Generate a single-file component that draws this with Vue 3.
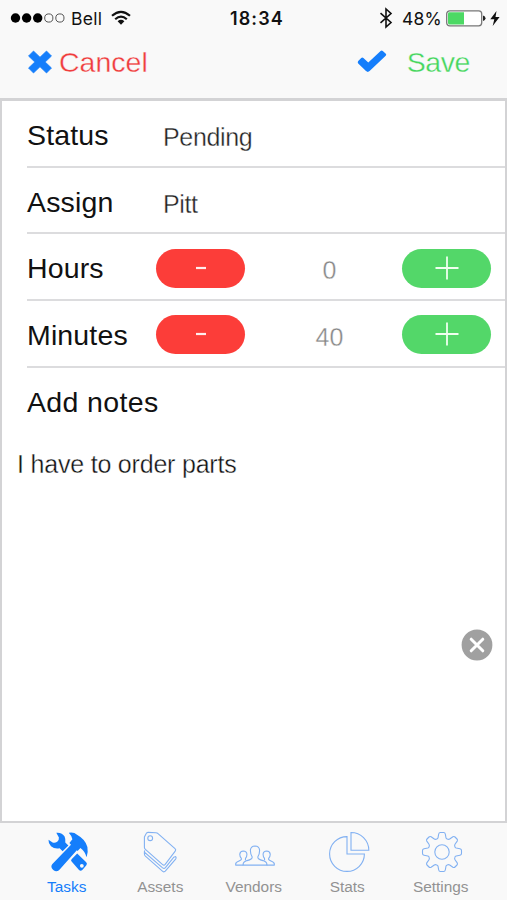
<script setup>
import { ref } from 'vue'

const details = [
  { label: 'Status', value: 'Pending' },
  { label: 'Assign', value: 'Pitt' },
]
const counters = ref([
  { label: 'Hours', value: 0, step: 1 },
  { label: 'Minutes', value: 40, step: 5 },
])
const tabs = ['Tasks', 'Assets', 'Vendors', 'Stats', 'Settings']
const active = ref('Tasks')
</script>

<template>
  <div class="screen">
    <header class="top">
      <div class="statusbar">
        <svg class="signal" width="56" height="12" viewBox="0 0 56 12">
          <circle v-for="n in 3" :key="n" :cx="n * 11.1 - 5.6" cy="6" r="4.7" fill="#000" />
          <circle v-for="n in 2" :key="n + 3" :cx="n * 11.1 + 27.7" cy="6" r="4.1" fill="none" stroke="#555" stroke-width="1" />
        </svg>
        <span class="carrier">Bell</span>
        <svg class="wifi" width="20" height="16" viewBox="0 0 20 16">
          <g fill="none" stroke="#111" stroke-width="2.2">
            <path d="M1 5.8Q10-2.2 19 5.8" />
            <path d="M4.2 9.2Q10 4 15.8 9.2" />
          </g>
          <path d="M6.6 11.2Q10 8.3 13.4 11.2L10 14.8Z" fill="#111" />
        </svg>
        <span class="clock">18:34</span>
        <svg class="bluetooth" width="14" height="22" viewBox="0 0 14 22">
          <path d="M1.5 6.2L12 15.5L7 20V2L12 6.5L1.5 15.8" fill="none" stroke="#111" stroke-width="1.6" />
        </svg>
        <span class="percent">48%</span>
        <svg class="battery" width="40" height="17" viewBox="0 0 40 17">
          <rect x=".7" y=".8" width="35" height="15" rx="3" fill="#fff" stroke="#777" stroke-width="1.3" />
          <path d="M3.4 2.2H18V14.4H3.4Q2 14.4 2 13V3.6Q2 2.2 3.4 2.2Z" fill="#4cd964" />
          <path d="M37 5.5Q39.5 6 39.5 8.3T37 11Z" fill="#222" />
        </svg>
        <svg class="bolt" width="10" height="15" viewBox="0 0 10 15">
          <path d="M6.5 0L.3 8.3H4.3L2.7 15L9.6 6H5.5Z" fill="#111" />
        </svg>
      </div>
      <div class="actions">
        <button class="cancel">
          <svg width="24" height="24" viewBox="0 0 24 24">
            <path d="M5.5 1L12 7.2L18.5 1L23.5 6L17.2 12L23.5 18L18.5 23L12 16.8L5.5 23L.5 18L6.8 12L.5 6Z" fill="#157efb" stroke="#157efb" stroke-width=".7" stroke-linejoin="round" />
          </svg>
          <span>Cancel</span>
        </button>
        <button class="save">
          <svg width="30" height="23" viewBox="0 0 30 23">
            <path d="M1.2 11L4.2 8Q5.3 7 6.4 8L11.3 12.4L23.6 .9Q24.7 0 25.8 .9L28.8 3.8Q29.7 4.7 28.7 5.8L12.6 21.1Q10.8 22.7 9 21.1L1.2 13.4Q.2 12.2 1.2 11Z" fill="#157efb" />
          </svg>
          <span>Save</span>
        </button>
      </div>
    </header>

    <main class="panel">
      <section v-for="item in details" :key="item.label" class="row detail">
        <span class="label">{{ item.label }}</span>
        <span class="value">{{ item.value }}</span>
      </section>
      <section v-for="item in counters" :key="item.label" class="row counter">
        <span class="label">{{ item.label }}</span>
        <button class="pill minus" @click="item.value = Math.max(0, item.value - item.step)">
          <svg width="12" height="4" viewBox="0 0 12 4"><path d="M1 2H11" stroke="#ffeeed" stroke-width="2.2" /></svg>
        </button>
        <span class="number">{{ item.value }}</span>
        <button class="pill plus" @click="item.value += item.step">
          <svg width="24" height="24" viewBox="0 0 24 24"><path d="M.5 12H23.5M12 .5V23.5" stroke="#efffef" stroke-width="1.8" /></svg>
        </button>
      </section>
      <h2 class="label notes-title">Add notes</h2>
      <p class="notes">I have to order parts</p>
      <button class="clear">
        <svg width="32" height="32" viewBox="0 0 32 32">
          <circle cx="16" cy="16" r="15.4" fill="#a0a0a0" />
          <path d="M10.2 10.2L21.8 21.8M21.8 10.2L10.2 21.8" stroke="#fff" stroke-width="3" stroke-linecap="round" />
        </svg>
      </button>
    </main>

    <nav class="tabs">
      <button v-for="tab in tabs" :key="tab" class="tab" :class="{ active: tab === active }" @click="active = tab">
        <svg v-if="tab === 'Tasks'" class="solid" width="42" height="42" viewBox="-1 -1 42 42">
          <path d="M8.3 .8Q14 .2 16.6 4.6Q17.8 7.4 17.3 10.6L20.4 13.4L14.6 19.2L11.6 16.2Q6.6 17.2 3 14.2Q.2 11.4 .5 7.8L4.6 10.6Q7.2 11.2 9.2 9.8Q11.2 8.2 10.9 5.4Z" />
          <path fill-rule="evenodd" d="M23.6 27.2L29.2 21.6L38.2 30.2Q39.7 31.8 38.2 33.4L34.3 37.9Q32.6 39.5 30.8 37.8L23.6 29.6Q22.5 28.4 23.6 27.2ZM33.8 31.9A1.9 1.9 0 1 0 33.9 35.7A1.9 1.9 0 0 0 33.8 31.9Z" />
          <path d="M20.8 .8Q25.6 -.3 29.4 3Q37.4 7.4 39.4 15Q40.4 20.5 38.6 25.2Q36.9 19.2 32.4 16L29.6 18.9L28.8 18.2L11 38.2Q8.3 40.4 5.6 38.2L4.6 37.2Q2.3 34.6 4.4 32L23 12.8L21.4 11.1L24.4 7.3Q23.8 3.9 20.8 .8Z" />
        </svg>
        <svg v-else-if="tab === 'Assets'" class="tags" width="42" height="42" viewBox="-1 -1 42 42">
          <path d="M4.4 5L6.2 1.6Q6.8 .3 8.2 .4L15.8 .8Q17.3 .9 18.3 1.8L35 16.6Q36.3 17.8 35.2 19.1L25.2 32.4Q24 33.8 22.6 32.6L5.4 17.4Q4.4 16.5 4.4 15.2Z" />
          <circle cx="10.2" cy="6.2" r="2.4" />
          <path d="M5.2 18.6Q4.2 19 4.4 20.2L22.6 35.9Q24.2 37 25.4 35.6L33.8 25.2L35.6 24.6Q36.6 25.8 35.6 27.1L25.3 39.2Q24 40.4 22.7 39.3L5.4 24.2Q4.4 23.2 4.4 22V20.2" />
        </svg>
        <svg v-else-if="tab === 'Vendors'" width="42" height="42" viewBox="-1 -1 42 42">
          <path d="M8.2 33.1Q7.5 30.3 12 28.6Q17.7 27.2 17.1 24.8Q15.3 21.8 15.4 18.1Q15.8 14.1 20 14Q24.2 14.1 24.6 18.1Q24.7 21.8 22.9 24.8Q22.3 27.2 28 28.6Q32.5 30.3 31.8 33.1Z" />
          <path d="M8.2 33.1H.8Q0 30.5 3.5 29.3Q7 28.1 6.3 26.4Q4.6 24.4 4.8 22.1Q5.1 19.1 8.3 19Q11.6 19.1 11.9 22.1Q12 24.4 10.5 26.4L10.4 28.2M31.8 33.1H39.2Q40 30.5 36.5 29.3Q33 28.1 33.7 26.4Q35.4 24.4 35.2 22.1Q34.9 19.1 31.7 19Q28.4 19.1 28.1 22.1Q28 24.4 29.5 26.4L29.6 28.2" />
        </svg>
        <svg v-else-if="tab === 'Stats'" width="42" height="42" viewBox="-1 -1 42 42">
          <path d="M18 4.6A17.4 17.4 0 1 0 35.4 22H18Z" />
          <path d="M22 .5V18.2H39.8A17.8 17.8 0 0 0 22 .5Z" />
        </svg>
        <svg v-else width="42" height="42" viewBox="-1 -1 42 42">
          <path d="M16.7 2Q17 .5 18.4.5H21.6Q23 .5 23.3 2L24 5.8Q24.3 6.8 25.2 7.1Q26.7 7.7 27.7 7L30.9 4.8Q32.1 4.1 33 5L35 7Q35.9 7.9 35.2 9.1L33 12.3Q32.3 13.3 32.9 14.8Q33.2 15.7 34.2 16L38 16.7Q39.5 17 39.5 18.4V21.6Q39.5 23 38 23.3L34.2 24Q33.2 24.3 32.9 25.2Q32.3 26.7 33 27.7L35.2 30.9Q35.9 32.1 35 33L33 35Q32.1 35.9 30.9 35.2L27.7 33Q26.7 32.3 25.2 32.9Q24.3 33.2 24 34.2L23.3 38Q23 39.5 21.6 39.5H18.4Q17 39.5 16.7 38L16 34.2Q15.7 33.2 14.8 32.9Q13.3 32.3 12.3 33L9.1 35.2Q7.9 35.9 7 35L5 33Q4.1 32.1 4.8 30.9L7 27.7Q7.7 26.7 7.1 25.2Q6.8 24.3 5.8 24L2 23.3Q.5 23 .5 21.6V18.4Q.5 17 2 16.7L5.8 16Q6.8 15.7 7.1 14.8Q7.7 13.3 7 12.3L4.8 9.1Q4.1 7.9 5 7L7 5Q7.9 4.1 9.1 4.8L12.3 7Q13.3 7.7 14.8 7.1Q15.7 6.8 16 5.8Z" />
          <circle cx="20" cy="20" r="7.2" />
        </svg>
        <span>{{ tab }}</span>
      </button>
    </nav>
  </div>
</template>

<style>
body {
  margin: 0;
}
</style>

<style scoped>
.screen {
  width: 507px;
  height: 900px;
  display: flex;
  flex-direction: column;
  overflow: hidden;
  background: #f9f9f9;
  font-family: "Liberation Sans", Arial, sans-serif;
  color: #111;
}
button {
  border: 0;
  padding: 0;
  margin: 0;
  background: none;
  font: inherit;
  color: inherit;
}
svg {
  display: block;
  flex: none;
}
.top {
  height: 98px;
  flex: none;
}
.statusbar {
  height: 36px;
  display: flex;
  align-items: center;
  padding-left: 10px;
  font-family: Inter, sans-serif;
  font-size: 17.5px;
  white-space: nowrap;
}
.carrier {
  width: 34px;
  margin-left: 5px;
  letter-spacing: 0.3px;
}
.wifi {
  margin-left: 6px;
}
.clock {
  width: 56px;
  margin-left: 99px;
  font-size: 18px;
  font-weight: 600;
  letter-spacing: 1.1px;
}
.bluetooth {
  margin-left: 93px;
}
.percent {
  width: 40px;
  margin-left: 9px;
  letter-spacing: 0.2px;
}
.battery {
  margin-left: 4px;
}
.bolt {
  margin-left: 4px;
}
.actions {
  height: 52px;
  display: flex;
  align-items: center;
  justify-content: space-between;
  padding: 0 37px 0 28px;
  font-size: 28.5px;
  -webkit-text-stroke: 0.35px #f9f9f9;
}
.cancel,
.save {
  display: flex;
  align-items: center;
}
.cancel {
  gap: 7px;
  color: #f03c3c;
}
.save {
  gap: 20px;
  color: #45d65d;
  letter-spacing: -0.4px;
}
.save svg {
  margin-bottom: 2px;
}
.panel {
  flex: 1;
  display: flex;
  flex-direction: column;
  background: #fff;
  border: solid #d3d3d5;
  border-width: 3px 2px 2px;
}
.row {
  height: 64.7px;
  flex: none;
  margin-left: 25px;
  border-bottom: 2px solid #dcdcde;
  display: grid;
  align-items: center;
}
.detail {
  grid-template-columns: 136px 1fr;
}
.counter {
  grid-template-columns: 129px 89px 1fr 89px;
  padding-right: 14px;
}
.label {
  font-size: 28.5px;
  line-height: 32px;
  letter-spacing: 0.15px;
  font-weight: 400;
}
.detail .label {
  padding-top: 3px;
}
.counter .label {
  padding-top: 3px;
}
.value {
  padding-top: 8px;
  font-size: 25px;
  color: #222;
  letter-spacing: -0.35px;
  -webkit-text-stroke: 0.35px #fff;
}
.pill {
  height: 39px;
  margin-top: 3px;
  border-radius: 20px;
  display: flex;
  justify-content: center;
  align-items: center;
}
.minus {
  background: #fc3d39;
}
.plus {
  background: #53d769;
}
.minus svg,
.plus svg {
  margin-bottom: 1px;
}
.number {
  text-align: center;
  padding-top: 8px;
  padding-left: 12px;
  font-size: 25px;
  color: #888;
  -webkit-text-stroke: 0.35px #fff;
}
.notes-title {
  margin: 18px 0 0 25px;
  letter-spacing: 0.35px;
}
.notes {
  margin: 30px 0 0 15px;
  font-size: 25px;
  line-height: 32px;
  letter-spacing: -0.2px;
  color: #111;
  -webkit-text-stroke: 0.35px #fff;
}
.clear {
  margin: 149px 12px 0 auto;
}
.tabs {
  height: 77px;
  flex: none;
  display: grid;
  grid-template-columns: repeat(5, 93.5px);
  padding-left: 20px;
}
.tab {
  display: flex;
  flex-direction: column;
  align-items: center;
  padding-top: 8px;
  font-size: 15.4px;
  line-height: 18px;
  color: #929292;
}
.tab svg {
  margin: 0 0 5px 3px;
  fill: none;
  stroke: #82b1f2;
  stroke-width: 1.1;
}
.tab .tags {
  margin-left: -1px;
}
.tab .solid {
  fill: #157efb;
  stroke: none;
}
.active {
  color: #157efb;
}
</style>
